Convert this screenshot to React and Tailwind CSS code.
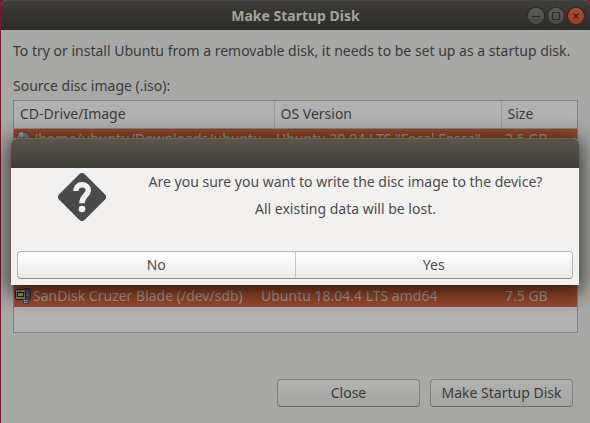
import React from "react";
import clsx from "clsx";

const images = [
  { name: "/home/ubuntu/Downloads/ubuntu-20.04.iso", version: 'Ubuntu 20.04 LTS "Focal Fossa"', size: "2.5 GB" },
];

const disks = [
  { name: "SanDisk Cruzer Blade (/dev/sdb)", version: "Ubuntu 18.04.4 LTS amd64", size: "7.5 GB" },
];

const DiscIcon = () => (
  <svg width="16" height="16" viewBox="0 0 16 16" className="shrink-0" aria-hidden="true">
    <circle cx="8" cy="8" r="7" fill="#83837f" stroke="#4b4b49" />
    <path d="M8 8 3 3a7 7 0 0 1 5-2z" fill="#a8a8a5" />
    <circle cx="8" cy="8" r="2" fill="#5d5d5a" />
  </svg>
);

const UsbIcon = () => (
  <svg width="16" height="16" viewBox="0 0 16 16" className="shrink-0" aria-hidden="true">
    <rect x="8.5" y=".5" width="7" height="11" rx="1" fill="#4d4450" stroke="#3b2447" />
    <path d="M11.5 3.5h2M11.5 5.5h2M11.5 7.5h2" stroke="#8a858d" />
    <rect x=".5" y="1.5" width="10" height="10" rx="1" fill="#85857c" stroke="#20201f" />
    <rect x="2.5" y="4.5" width="6" height="4" fill="#a49a31" stroke="#20201f" />
    <path d="m4 8 3-2" stroke="#c2b95b" />
    <rect x="8.5" y="11.5" width="5" height="4" fill="#999" stroke="#444" />
    <path d="M10 13.5h1M12 13.5h1" stroke="#222" />
  </svg>
);

const QuestionIcon = () => (
  <svg width="48" height="48" viewBox="0 0 48 48" className="shrink-0" aria-hidden="true">
    <path
      d="M21.2 1.2a4 4 0 0 1 5.6 0l20 20a4 4 0 0 1 0 5.6l-20 20a4 4 0 0 1-5.6 0l-20-20a4 4 0 0 1 0-5.6z"
      fill="#4a4a4a"
    />
    <path
      d="M17.8 18c0-4 2.8-6.2 6.3-6.2s6.2 2.1 6.2 5.4c0 5-6.4 5.8-6.4 13"
      fill="none"
      stroke="#f2f1f0"
      strokeWidth="5.4"
    />
    <circle cx="24" cy="36" r="3.3" fill="#f2f1f0" />
  </svg>
);

const WindowButton = ({ label, close, children }) => (
  <button
    aria-label={label}
    className={clsx(
      "flex size-4 items-center justify-center rounded-full shadow-[0_0_0_1px_#292825]",
      close ? "bg-linear-to-b from-[#a95033] to-[#a33a11]" : "bg-linear-to-b from-[#5d5c56] to-[#4a4a45]"
    )}
  >
    <svg width="8" height="8" viewBox="0 0 8 8" fill="none" stroke="#2b2a27" aria-hidden="true">
      {children}
    </svg>
  </button>
);

const DeviceRow = ({ item, icon }) => (
  <tr className="h-[22px] bg-[#9a492a] text-[#a9a19b]">
    <td className="p-0">
      <div className="flex items-center gap-0.5 pl-px">
        {icon}
        <span className="truncate">{item.name}</span>
      </div>
    </td>
    <td className="truncate p-0 pl-0.5">{item.version}</td>
    <td className="p-0 pl-1">{item.size}</td>
  </tr>
);

const ActionButton = ({ children }) => (
  <button className="h-7 w-[143px] rounded border border-[#7d7d7b] border-b-[#686866] bg-linear-to-b from-[#b2b2b1] to-[#a4a4a2]">
    {children}
  </button>
);

const ConfirmDialog = () => (
  <div
    role="dialog"
    aria-modal="true"
    aria-labelledby="confirm-text"
    className="absolute top-[138px] right-[11px] left-2.5 rounded-t-md bg-[#f2f1f0] text-[#4c4c4c] shadow-[0_4px_20px_4px_rgba(0,0,0,0.65)]"
  >
    <div className="h-[30px] rounded-t-md border-t border-[#66645b] bg-linear-to-b from-[#57554c] to-[#3f3e39]" />
    <div className="flex gap-1.5 pt-1">
      <div className="pt-px pl-[47px]">
        <QuestionIcon />
      </div>
      <div id="confirm-text" className="flex flex-1 flex-col gap-[7px] text-center leading-5">
        <p>Are you sure you want to write the disc image to the device?</p>
        <p>All existing data will be lost.</p>
      </div>
    </div>
    <div className="px-1.5 pt-[30px] pb-1.5">
      <div className="flex h-7 rounded border border-[#b4b4b1] border-b-[#8f8f8c] bg-linear-to-b from-white to-[#ebeae9]">
        <button className="flex-1 border-r border-[#c4c4c1]">No</button>
        <button className="flex-1">Yes</button>
      </div>
    </div>
  </div>
);

export default function App() {
  return (
    <div className="min-h-screen bg-[#7d1429] pl-px font-['Noto_Sans',sans-serif] text-sm text-[#3a3a3a]">
      <div className="relative flex min-h-screen flex-col rounded-t-md bg-[#a8a8a6]">
        <header className="grid h-[30px] grid-cols-[1fr_auto_1fr] items-center rounded-t-md border-t border-[#46453f] bg-linear-to-b from-[#3d3c37] to-[#2c2b28] px-1.5">
          <h1 className="col-start-2 font-bold text-[#a5a39b]">Make Startup Disk</h1>
          <div className="flex justify-end gap-1">
            <WindowButton label="Minimize">
              <path d="M0 4.5h8" />
            </WindowButton>
            <WindowButton label="Maximize">
              <path d="M.5.5h7v7h-7z" />
            </WindowButton>
            <WindowButton label="Close window" close>
              <path d="m1.5 1.5 5 5m0-5-5 5" strokeWidth="1.4" />
            </WindowButton>
          </div>
        </header>

        <main className="flex flex-1 flex-col px-3 pt-[11px]">
          <p className="leading-5 whitespace-nowrap">
            To try or install Ubuntu from a removable disk, it needs to be set up as a startup disk.
          </p>
          <p id="source-label" className="pt-[15px] pb-1 leading-5">
            Source disc image (.iso):
          </p>

          <div className="border border-[#81817f] bg-[#b1b1b1]">
            <table aria-labelledby="source-label" className="w-full table-fixed border-collapse">
              <thead>
                <tr className="h-[27px] border-b border-[#8c8c8a] text-left">
                  <th className="w-[260px] border-r border-[#9a9a98] p-0 pl-1.5 font-normal">CD-Drive/Image</th>
                  <th className="border-r border-[#9a9a98] p-0 pl-1.5 font-normal">OS Version</th>
                  <th className="w-[76px] p-0 pl-1.5 font-normal">Size</th>
                </tr>
              </thead>
              <tbody>
                {images.map((item) => (
                  <DeviceRow key={item.name} item={item} icon={<DiscIcon />} />
                ))}
              </tbody>
            </table>
          </div>

          <div className="mt-auto h-[85px] border border-[#81817f] bg-[#b1b1b1] pt-9">
            <table className="w-full table-fixed border-collapse">
              <colgroup>
                <col className="w-[245px]" />
                <col />
                <col className="w-[76px]" />
              </colgroup>
              <tbody>
                {disks.map((item) => (
                  <DeviceRow key={item.name} item={item} icon={<UsbIcon />} />
                ))}
              </tbody>
            </table>
          </div>

          <div className="flex justify-end gap-2.5 pt-[46px] pr-[5px] pb-4">
            <ActionButton>Close</ActionButton>
            <ActionButton>Make Startup Disk</ActionButton>
          </div>
        </main>

        <ConfirmDialog />
      </div>
    </div>
  );
}
